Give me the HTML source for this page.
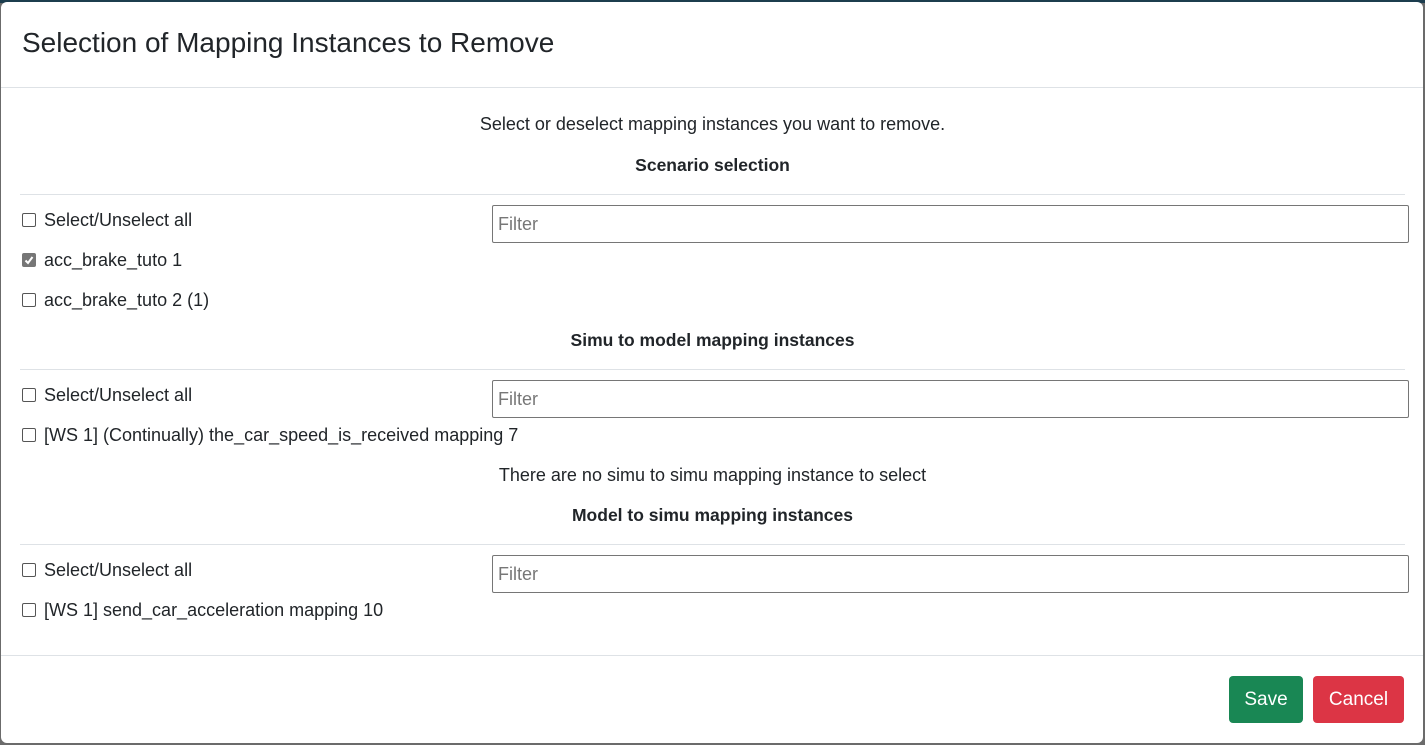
<!DOCTYPE html>
<html><head><style>
body{margin:0;width:1425px;height:745px;background:#6b6b6b;position:relative;overflow:hidden;font-family:"Liberation Sans",sans-serif;color:#212529}
.top{position:absolute;left:0;top:0;width:1425px;height:3px;background:#1c3d4e}
.modal{position:absolute;left:1px;top:2px;width:1422px;height:741px;background:#fff;border-radius:6px}
.a{position:absolute;white-space:nowrap}
.t{font-size:18px}
.c{left:0;width:1425px;text-align:center}
.b{font-weight:bold;font-size:17.5px}
.hr{position:absolute;height:1px;background:#dee2e6}
.cb{position:absolute;left:22px;width:12px;height:12px;border:1px solid #555;border-radius:2px;background:#fff}
.lab{left:44px;font-size:18px}
.in{position:absolute;left:492px;width:910px;height:36px;border:1px solid #767676;border-radius:2px;font-size:18px;color:#777;line-height:36px;padding-left:5px;box-sizing:content-box}
.btn{position:absolute;top:676px;height:47px;border-radius:4px;color:#fff;font-size:19px;line-height:47px;text-align:center}
</style></head><body>
<div class="top"></div>
<div class="modal"></div>
<div class="a" style="left:22px;top:27px;font-size:28px">Selection of Mapping Instances to Remove</div>
<div class="hr" style="left:1px;width:1422px;top:87px"></div>
<div class="a t c" style="top:114px">Select or deselect mapping instances you want to remove.</div>
<div class="a b c" style="top:155px">Scenario selection</div>
<div class="hr" style="left:20px;width:1385px;top:194px"></div>
<div class="cb" style="top:213px"></div><div class="a lab" style="top:210px">Select/Unselect all</div>
<div class="in" style="top:205px">Filter</div>
<div class="cb" style="top:253px;background:#767676;border-color:#767676"><svg width="12" height="12" style="position:absolute;left:0;top:0"><path d="M2.5 6.5L5 9L9.5 3" stroke="#fff" stroke-width="2" fill="none"/></svg></div><div class="a lab" style="top:250px">acc_brake_tuto 1</div>
<div class="cb" style="top:293px"></div><div class="a lab" style="top:290px">acc_brake_tuto 2 (1)</div>
<div class="a b c" style="top:330px">Simu to model mapping instances</div>
<div class="hr" style="left:20px;width:1385px;top:369px"></div>
<div class="cb" style="top:388px"></div><div class="a lab" style="top:385px">Select/Unselect all</div>
<div class="in" style="top:380px">Filter</div>
<div class="cb" style="top:428px"></div><div class="a lab" style="top:425px">[WS 1] (Continually) the_car_speed_is_received mapping 7</div>
<div class="a t c" style="top:465px">There are no simu to simu mapping instance to select</div>
<div class="a b c" style="top:505px">Model to simu mapping instances</div>
<div class="hr" style="left:20px;width:1385px;top:544px"></div>
<div class="cb" style="top:563px"></div><div class="a lab" style="top:560px">Select/Unselect all</div>
<div class="in" style="top:555px">Filter</div>
<div class="cb" style="top:603px"></div><div class="a lab" style="top:600px">[WS 1] send_car_acceleration mapping 10</div>
<div class="hr" style="left:1px;width:1422px;top:655px"></div>
<div class="btn" style="left:1229px;width:74px;background:#198754">Save</div>
<div class="btn" style="left:1313px;width:91px;background:#dc3545">Cancel</div>
</body></html>
